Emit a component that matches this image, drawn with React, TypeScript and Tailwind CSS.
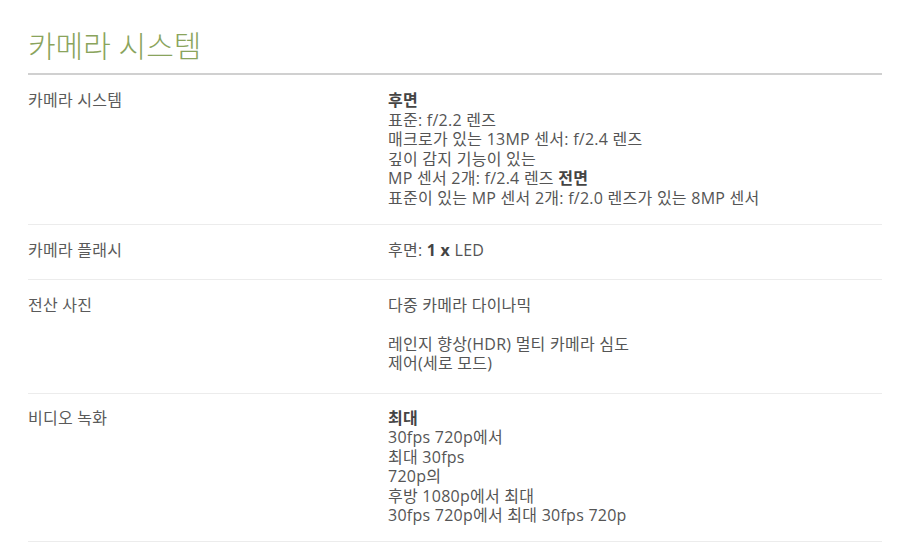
const font = { fontFamily: '"Open Sans", "Noto Sans CJK KR", sans-serif' };

type Row = { label: string; pad: string; value: React.ReactNode };

const B = ({ children }: { children: React.ReactNode }) => (
  <b className="font-bold text-[#444]">{children}</b>
);

const rows: Row[] = [
  {
    label: "카메라 시스템",
    pad: "pt-4 pb-4",
    value: (
      <>
        <div>
          <B>후면</B>
        </div>
        <div>표준: f/2.2 렌즈</div>
        <div>매크로가 있는 13MP 센서: f/2.4 렌즈</div>
        <div>깊이 감지 기능이 있는</div>
        <div>
          MP 센서 2개: f/2.4 렌즈 <B>전면</B>
        </div>
        <div>표준이 있는 MP 센서 2개: f/2.0 렌즈가 있는 8MP 센서</div>
      </>
    ),
  },
  {
    label: "카메라 플래시",
    pad: "pt-4 pb-[18px]",
    value: (
      <div>
        후면: <B>1 x</B> LED
      </div>
    ),
  },
  {
    label: "전산 사진",
    pad: "pt-4 pb-[19px]",
    value: (
      <>
        <div>다중 카메라 다이나믹</div>
        <div className="mt-[19.5px]">레인지 향상(HDR) 멀티 카메라 심도</div>
        <div>제어(세로 모드)</div>
      </>
    ),
  },
  {
    label: "비디오 녹화",
    pad: "pt-[15px] pb-[15px]",
    value: (
      <>
        <div>
          <B>최대</B>
        </div>
        <div>30fps 720p에서</div>
        <div>최대 30fps</div>
        <div>720p의</div>
        <div>후방 1080p에서 최대</div>
        <div>30fps 720p에서 최대 30fps 720p</div>
      </>
    ),
  },
];

export default function App() {
  return (
    <div className="min-h-[560px] bg-white pl-[28px] pr-[18px] pt-[25px]" style={font}>
      <h1 className="text-[30px] font-light leading-[42px] text-[#8aa45c]">카메라 시스템</h1>
      <div className="mt-[6px] h-[2px] bg-[#d0d0d0]" />
      <div>
        {rows.map((r) => (
          <div
            key={r.label}
            className={`flex border-b border-[#ececec] text-[16px] leading-[19.5px] tracking-[0.25px] text-[#555] ${r.pad}`}
          >
            <div className="w-[360px] shrink-0 text-[#5a5a5a]">{r.label}</div>
            <div className="flex-1">{r.value}</div>
          </div>
        ))}
      </div>
    </div>
  );
}
